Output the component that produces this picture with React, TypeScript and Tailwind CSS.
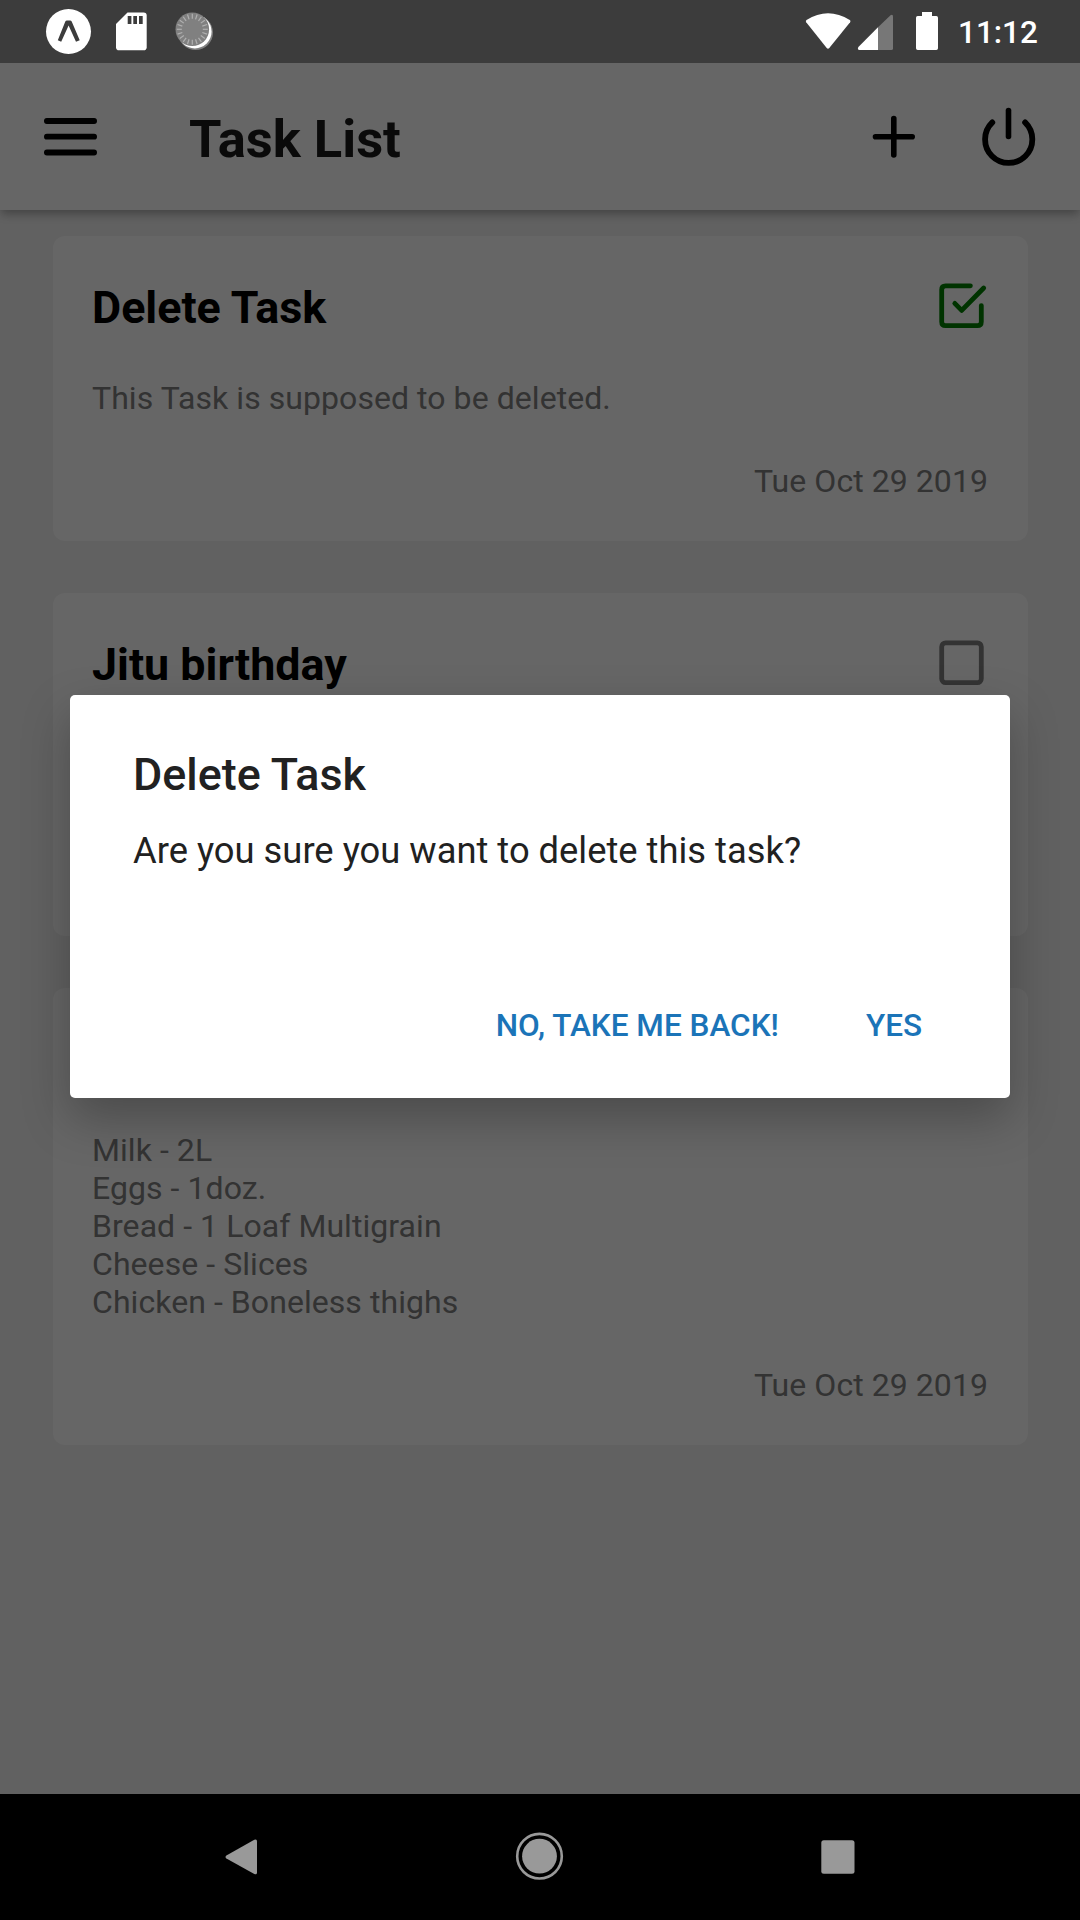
import React from "react";

type Task = { title: string; done: boolean; lines: string[]; date: string };

const tasks: Task[] = [
  { title: "Delete Task", done: true, lines: ["This Task is supposed to be deleted."], date: "Tue Oct 29 2019" },
  { title: "Jitu birthday", done: false, lines: ["", ""], date: "" },
  {
    title: "",
    done: false,
    lines: ["Milk - 2L", "Eggs - 1doz.", "Bread - 1 Loaf Multigrain", "Cheese - Slices", "Chicken - Boneless thighs"],
    date: "Tue Oct 29 2019",
  },
];

const ticks = Array.from({ length: 20 }, (_, i) => i * 18);

function StatusBar() {
  return (
    <div className="flex h-[63px] shrink-0 items-center bg-[#3c3c3c]">
      <svg className="h-[63px] w-[225px]" viewBox="0 0 225 63">
        <circle cx="68.5" cy="31.5" r="22.5" fill="#fff" />
        <path d="M57.8 40.2 L65.3 21.6 Q65.8 20.5 67 20.5 H70 Q71.2 20.5 71.7 21.6 L79.7 40.2 L76 41.7 L68.6 25.6 L61.2 41.7 Z" fill="#3c3c3c" />
        <path d="M127.5 12.4 H143.6 Q146.7 12.4 146.7 15.5 V47.2 Q146.7 50.3 143.6 50.3 H119.1 Q116 50.3 116 47.2 V23.9 Z" fill="#fff" />
        <path d="M127.7 16h3.7v8h-3.7zM133.3 16h3.7v8h-3.7zM139 16h3.7v8H139z" fill="#3c3c3c" />
        <circle cx="195.6" cy="32.6" r="17.4" fill="#808080" />
        <circle cx="194.8" cy="31.6" r="16.8" fill="#fff" />
        <circle cx="192.3" cy="29.3" r="16.8" fill="#808080" />
        {ticks.map((a) => (
          <path key={a} d="M192.3 13.8v5" stroke="#b0b0b0" strokeWidth="1.2" transform={`rotate(${a} 192.3 29.3)`} />
        ))}
      </svg>
      <svg className="ml-auto h-[63px] w-[143px]" viewBox="800 0 143 63">
        <path d="M806.5 19.9 Q828 6.5 849.8 19.9 Q851 20.9 850.1 22.3 L829.3 48 Q828 49.5 826.7 48 L806.2 22.3 Q805.3 20.9 806.5 19.9 Z" fill="#fff" />
        <path d="M878 27.3 L890.5 15.2 Q893 13.8 893 16.5 V48.4 Q893 50 891.4 50 H878 Z" fill="#777" />
        <path d="M878 27.3 V50 H859.4 Q857 49.6 858.4 47 Z" fill="#fff" />
        <path d="M922 12h10v4h4.3q1.7 0 1.7 1.7v30.6q0 1.7-1.7 1.7h-18.6q-1.7 0-1.7-1.7V17.7q0-1.7 1.7-1.7h4.3z" fill="#fff" />
      </svg>
      <span className="mt-[2px] ml-[15px] w-[122px] text-[31.5px] leading-[38px] font-medium text-white">11:12</span>
    </div>
  );
}

function Header() {
  return (
    <header className="relative flex h-[147px] shrink-0 items-center bg-white shadow-[0_5px_9px_-1px_rgba(0,0,0,0.3)]">
      <svg className="ml-[36px] h-[69px] w-[69px]" viewBox="36 102 69 69" fill="none" stroke="#000" strokeWidth="5.8" strokeLinecap="round">
        <path d="M46.9 121H94.1M46.9 136.7H94.1M46.9 152.5H94.1" />
      </svg>
      <h1 className="mt-[4px] ml-[84px] text-[52.5px] leading-[62px] font-bold text-black/90">Task List</h1>
      <svg className="ml-auto h-[69px] w-[200px]" viewBox="860 102 200 69" fill="none" stroke="#000" strokeLinecap="round">
        <path d="M875.5 136.7H912.2M893.8 118.5V155" strokeWidth="5.6" />
        <path d="M1008.5 110.5V136.5" strokeWidth="5.6" />
        <path d="M992.3 122.4A23.6 23.6 0 1 0 1025.1 122.4" strokeWidth="5.8" />
      </svg>
      <div className="w-[20px]" />
    </header>
  );
}

function Checkbox({ done }: { done: boolean }) {
  return (
    <svg
      className={done ? "h-[52px] w-[52px] text-[#008000]" : "h-[52px] w-[52px] text-[#808080]"}
      viewBox="936 282 52 52"
      fill="none"
      stroke="currentColor"
      strokeWidth="4.8"
      strokeLinecap="round"
      strokeLinejoin="round"
    >
      {done ? (
        <>
          <path d="M970.4 285.8H945.6Q941.7 285.8 941.7 289.7V321.7Q941.7 325.6 945.6 325.6H977.4Q981.3 325.6 981.3 321.7V305.6" />
          <path d="M954.8 303.4L961.7 310.4L983.7 288" />
        </>
      ) : (
        <rect x="941.7" y="285.8" width="39.6" height="39.8" rx="3.9" />
      )}
    </svg>
  );
}

function TaskCard({ task }: { task: Task }) {
  return (
    <section className="rounded-[12px] bg-white pt-[46px] pr-[40px] pb-[41px] pl-[39px]">
      <div className="flex h-[52px] justify-between">
        <h2 className="-mt-px text-[44.85px] leading-[53px] font-bold text-black">{task.title}</h2>
        <Checkbox done={task.done} />
      </div>
      <div className="mt-[45px] text-[32px] leading-[38px] tracking-[0.06px] text-[#808080]">
        {task.lines.map((line, i) => (
          <p key={i} className="h-[38px]">{line}</p>
        ))}
      </div>
      <p className="mt-[45px] h-[38px] text-right text-[32px] leading-[38px] tracking-[0.06px] text-[#808080]">{task.date}</p>
    </section>
  );
}

function Dialog() {
  return (
    <div className="absolute inset-0 flex items-start justify-center bg-black/60 pt-[632px]">
      <div className="h-[403px] w-[940px] rounded-[5px] bg-white px-[63px] pt-[53px] shadow-[0_20px_48px_rgba(0,0,0,0.27)]">
        <h2 className="text-[44.85px] leading-[53px] font-medium text-[#212121]">Delete Task</h2>
        <p className="mt-[28px] text-[36.35px] leading-[44px] text-[#212121]">Are you sure you want to delete this task?</p>
        <div className="mt-[134px] flex justify-end gap-[87px] pr-[25px] text-[31.5px] leading-[38px] font-medium text-[#1b74b8]">
          <button>NO, TAKE ME BACK!</button>
          <button>YES</button>
        </div>
      </div>
    </div>
  );
}

function NavBar() {
  return (
    <nav className="flex h-[126px] shrink-0 items-center justify-center bg-black">
      <svg className="h-[126px] w-[1080px]" viewBox="0 1794 1080 126" fill="#999">
        <path d="M226.4 1855.4L254.3 1839.8Q257 1838.6 257 1841.4V1872.4Q257 1875.2 254.3 1874L226.4 1858.4Q224.6 1856.9 226.4 1855.4Z" />
        <circle cx="539.5" cy="1856.2" r="17.4" />
        <circle cx="539.5" cy="1856.2" r="22.3" fill="none" stroke="#999" strokeWidth="2.6" />
        <rect x="821.3" y="1840.2" width="33.2" height="33.6" rx="2.5" />
      </svg>
    </nav>
  );
}

export default function App() {
  return (
    <div className="flex h-[1920px] w-[1080px] flex-col overflow-hidden bg-black font-['Roboto',sans-serif]">
      <StatusBar />
      <div className="relative flex flex-1 flex-col overflow-hidden bg-[#f2f2f2]">
        <Header />
        <main className="flex flex-col gap-[52px] pt-[26px] pr-[52px] pl-[53px]">
          {tasks.map((t, i) => (
            <TaskCard key={i} task={t} />
          ))}
        </main>
        <Dialog />
      </div>
      <NavBar />
    </div>
  );
}
